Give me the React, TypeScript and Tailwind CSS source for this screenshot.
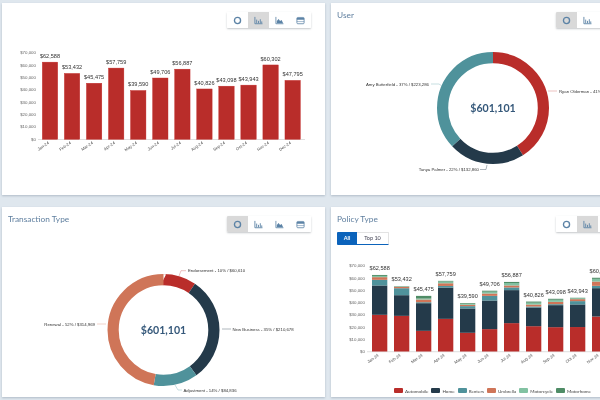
import type { ReactNode } from "react";

const RED = "#b92d2a";
const NAVY = "#243a4a";
const TEAL = "#4f929b";
const PEACH = "#cf7558";
const MINT = "#82c2a2";
const GREEN = "#4f8c66";

const months = ["Jan-24", "Feb-24", "Mar-24", "Apr-24", "May-24", "Jun-24", "Jul-24", "Aug-24", "Sep-24", "Oct-24", "Nov-24", "Dec-24"];
const totals = [62588, 53432, 45475, 57759, 39590, 49706, 56887, 40826, 43098, 43943, 60302, 47795];
const ticks = [0, 10000, 20000, 30000, 40000, 50000, 60000, 70000];

// automobile, home, renters, umbrella, motorcycle, motorhome
const stacks = [
  [30000, 24000, 4600, 2200, 1000, 788],
  [29150, 16900, 5700, 1100, 300, 282],
  [16900, 22600, 800, 2200, 800, 2175],
  [26700, 25600, 1300, 2200, 1400, 559],
  [15300, 19900, 1900, 1100, 800, 590],
  [18300, 23400, 3800, 1900, 1500, 806],
  [23200, 27000, 2200, 1600, 2000, 887],
  [20700, 15300, 800, 1600, 1500, 926],
  [19900, 18000, 800, 1900, 1700, 798],
  [20000, 18500, 2700, 1600, 700, 443],
  [28600, 23200, 1900, 3500, 2200, 902],
  [22000, 17000, 3000, 2500, 2000, 1295],
];
const stackColors = [RED, NAVY, TEAL, PEACH, MINT, GREEN];
const legend = [
  ["Automobile", RED],
  ["Home", NAVY],
  ["Renters", TEAL],
  ["Umbrella", PEACH],
  ["Motorcycle", MINT],
  ["Motorhome", GREEN],
];

const money = (n: number) => "$" + n.toLocaleString("en-US");

function ChartIcon({ kind }: { kind: number }) {
  return (
    <svg width="9" height="9" viewBox="0 0 10 10" fill="none" stroke="#5c83a6">
      {kind === 0 && <circle cx="5" cy="5" r="3.4" strokeWidth="1.5" />}
      {kind === 1 && <path d="M1 1v7.6h8.4M3 8V4M5 8V5.4M7 8V3.6M8.6 8V6" strokeWidth="1" />}
      {kind === 2 && (
        <>
          <path d="M1 1v7.6h8.4" strokeWidth="0.9" />
          <path d="M2 8V5.6L4 3.2 5.6 5.6 7.4 4.4 9 8z" fill="#5c83a6" stroke="none" />
        </>
      )}
      {kind === 3 && (
        <>
          <rect x="1" y="1.6" width="8" height="7" rx="1" strokeWidth="0.9" />
          <path d="M1 2.2h8v2H1z" fill="#5c83a6" stroke="none" />
          <path d="M1 6.2h8" strokeWidth="0.6" />
        </>
      )}
    </svg>
  );
}

function ChartToggle({ active }: { active: number }) {
  return (
    <div className="flex h-[16px] shrink-0 overflow-hidden rounded-[1px] bg-white shadow-[0_1px_2px_rgba(60,70,80,0.3)]">
      {[0, 1, 2, 3].map((kind) => (
        <button
          key={kind}
          type="button"
          className={
            kind === active
              ? "flex w-[21px] items-center justify-center bg-[#d9d9d9]"
              : "flex w-[21px] items-center justify-center bg-white"
          }
        >
          <ChartIcon kind={kind} />
        </button>
      ))}
    </div>
  );
}

function Axis({ zero, perTen, top }: { zero: number; perTen: number; top: number }) {
  return (
    <g fontFamily="'Liberation Sans', sans-serif">
      {ticks.map((t) => (
        <text key={t} x={top} y={zero - (t / 10000) * perTen + 1.5} fontSize="4.4" fill="#666" textAnchor="end">
          {money(t)}
        </text>
      ))}
    </g>
  );
}

function MonthLabels({ first, y }: { first: number; y: number }) {
  return (
    <g fontFamily="'Liberation Sans', sans-serif" fontSize="4.2" fill="#555">
      {months.map((m, i) => {
        const x = first + i * 22 + 7;
        return (
          <text key={m} x={x} y={y} textAnchor="end" transform={`rotate(-35 ${x} ${y})`}>
            {m}
          </text>
        );
      })}
    </g>
  );
}

function SalesBars() {
  const zero = 139.3;
  const scale = 86.3 / 70000;
  const first = 42.3;
  return (
    <svg className="block h-[151px] w-[323px]" viewBox="2 44 323 151">
      <Axis zero={zero} perTen={12.33} top={36} />
      <path d={`M38 ${zero + 0.2}H305`} stroke="#c9c9c9" strokeWidth="0.6" />
      {totals.map((v, i) => {
        const x = first + i * 22.06;
        const h = v * scale;
        return (
          <g key={months[i]}>
            <rect x={x} y={zero - h} width="15.4" height={h} fill={RED} stroke="#c42a28" strokeWidth="0.4" />
            <text
              x={x + 7.7}
              y={zero - h - 4.4}
              fontSize="5.6"
              fill="#333"
              textAnchor="middle"
              fontFamily="'Liberation Sans', sans-serif"
            >
              {money(v)}
            </text>
          </g>
        );
      })}
      <MonthLabels first={first} y={143.5} />
    </svg>
  );
}

function PolicyBars() {
  const zero = 351.5;
  const scale = 85.6 / 70000;
  const first = 372;
  return (
    <svg className="block h-[137px] w-[323px]" viewBox="331 248 323 137">
      <Axis zero={zero} perTen={12.23} top={365} />
      <path d={`M367 ${zero + 0.2}H640`} stroke="#c9c9c9" strokeWidth="0.6" />
      {stacks.map((parts, i) => {
        const x = first + i * 22;
        let y = zero;
        return (
          <g key={months[i]}>
            {parts.map((p, j) => {
              const h = p * scale;
              y -= h;
              return <rect key={j} x={x} y={y} width="15.3" height={h} fill={stackColors[j]} />;
            })}
            <text
              x={x + 7.7}
              y={zero - totals[i] * scale - 5}
              fontSize="5.6"
              fill="#333"
              textAnchor="middle"
              fontFamily="'Liberation Sans', sans-serif"
            >
              {money(totals[i])}
            </text>
          </g>
        );
      })}
      <MonthLabels first={first} y={356} />
    </svg>
  );
}

interface Callout {
  text: string;
  x: number;
  y: number;
  anchor: "start" | "end";
  line: string;
  color: string;
}

function Donut({
  box,
  cx,
  cy,
  parts,
  callouts,
  height,
}: {
  box: string;
  cx: number;
  cy: number;
  parts: [number, string][];
  callouts: Callout[];
  height: string;
}) {
  let offset = 0;
  return (
    <svg className={`block w-[323px] ${height}`} viewBox={box}>
      {parts.map(([pct, color]) => {
        const dash = offset;
        offset += pct;
        return (
          <circle
            key={color}
            cx={cx}
            cy={cy}
            r="50.4"
            fill="none"
            stroke={color}
            strokeWidth="11.2"
            pathLength={100}
            strokeDasharray={`${pct} ${100 - pct}`}
            strokeDashoffset={-dash}
            transform={`rotate(-90 ${cx} ${cy})`}
          />
        );
      })}
      <text
        x={cx}
        y={cy + 4}
        textAnchor="middle"
        fontSize="10.6"
        fontWeight="700"
        fill="#35587a"
        fontFamily="Lato, sans-serif"
      >
        $601,101
      </text>
      {callouts.map((c) => (
        <g key={c.text}>
          <path d={c.line} fill="none" stroke={c.color} strokeWidth="0.5" />
          <text
            x={c.x}
            y={c.y + 1.5}
            textAnchor={c.anchor}
            fontSize="4.3"
            fill="#333"
            fontFamily="'Liberation Sans', sans-serif"
          >
            {c.text}
          </text>
        </g>
      ))}
    </svg>
  );
}

function Card({
  title,
  active,
  tabs,
  children,
}: {
  title?: string;
  active: number;
  tabs?: boolean;
  children: ReactNode;
}) {
  return (
    <section className="flex flex-col overflow-hidden bg-white shadow-[0_1px_2px_rgba(90,110,130,0.35)]">
      <header className="flex h-[41px] items-start justify-between pr-[14px] pl-[6px] pt-[9px]">
        <div>
          <h2 className="-mt-[4px] h-[14px] text-[8.3px] leading-[14px] font-normal text-[#5f7f9f]">{title}</h2>
          {tabs && (
            <div className="mt-[6px] flex h-[13px] w-[52px] overflow-hidden rounded-[1px] text-[5.5px] font-bold">
              <span className="flex w-[20px] items-center justify-center bg-[#0b63bb] text-white">All</span>
              <span className="flex flex-1 items-center justify-center border-t border-r border-b border-t-[#e3e3e3] border-r-[#e3e3e3] border-b-[#0b63bb] font-normal text-[#445]">
                Top 10
              </span>
            </div>
          )}
        </div>
        <ChartToggle active={active} />
      </header>
      {children}
    </section>
  );
}

export default function App() {
  return (
    <div className="h-[400px] w-[600px] overflow-hidden bg-[#dfe7ee] pt-[3px] pl-[2px] font-['Lato',sans-serif]">
      <div className="grid w-[652px] grid-cols-[323px_323px] grid-rows-[192px_190px] gap-x-[6px] gap-y-[12px] blur-[0.6px]">
        <Card active={1}>
          <SalesBars />
        </Card>
        <Card title="User" active={0}>
          <Donut
            box="331 44 323 151"
            height="h-[151px]"
            cx={493}
            cy={108}
            parts={[
              [41, RED],
              [22, NAVY],
              [37, TEAL],
            ]}
            callouts={[
              { text: "Amy Butterfield - 37% / $223,286", x: 429, y: 84, anchor: "end", line: "M431 84H439L442 86", color: "#8fbcc2" },
              { text: "Ryan Olderman - 41% / $244,955", x: 559, y: 91, anchor: "start", line: "M548 91H557", color: "#d98583" },
              { text: "Tanya Palmer - 22% / $132,860", x: 479, y: 169.5, anchor: "end", line: "M480 169.5H486L487 165", color: "#5d6d79" },
            ]}
          />
        </Card>
        <Card title="Transaction Type" active={0}>
          <Donut
            box="2 248 323 149"
            height="h-[149px]"
            cx={163.5}
            cy={330}
            parts={[
              [9.5, RED],
              [30.5, NAVY],
              [12.8, TEAL],
              [47.2, PEACH],
            ]}
            callouts={[
              { text: "Endorsement - 10% / $60,610", x: 188, y: 270.7, anchor: "start", line: "M179 276L181 270.7H186", color: "#d98583" },
              { text: "New Business - 35% / $210,678", x: 232.5, y: 329, anchor: "start", line: "M222 329H231", color: "#5d6d79" },
              { text: "Adjustment - 14% / $84,836", x: 183.5, y: 390, anchor: "start", line: "M175 385L178 390H182", color: "#8fbcc2" },
              { text: "Renewal - 52% / $314,969", x: 95, y: 324, anchor: "end", line: "M97 324H106", color: "#e2a794" },
            ]}
          />
        </Card>
        <Card title="Policy Type" active={1} tabs>
          <PolicyBars />
          <div className="flex h-[12px] w-[323px] items-center justify-center gap-x-[3px] text-[4.6px] text-[#444]">
            {legend.map(([name, color]) => (
              <span key={name} className="flex items-center gap-x-[2px]">
                <span className="h-[5px] w-[9px] rounded-[1px]" style={{ backgroundColor: color }} />
                {name}
              </span>
            ))}
          </div>
        </Card>
      </div>
    </div>
  );
}
